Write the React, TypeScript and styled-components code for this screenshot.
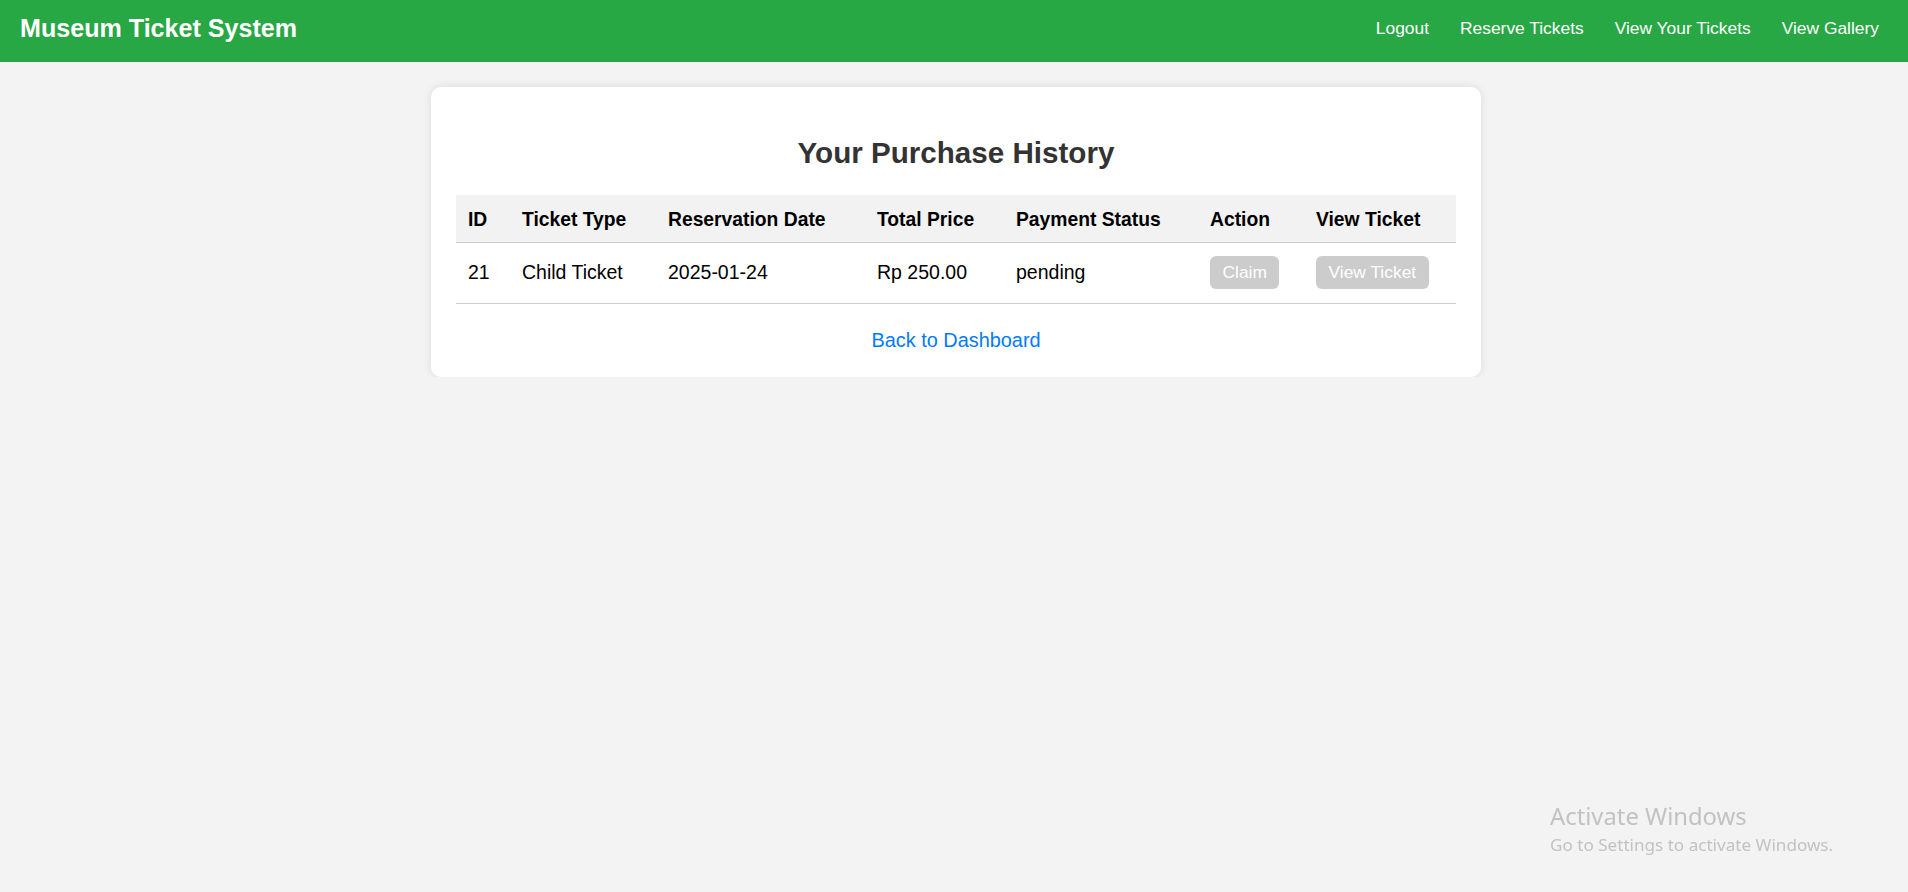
import React from "react";
import styled, { createGlobalStyle } from "styled-components";

const GlobalStyle = createGlobalStyle`
  html, body {
    margin: 0;
    padding: 0;
    background: #f3f3f3;
    font-family: "Liberation Sans", Arial, sans-serif;
  }
  * { box-sizing: border-box; }
`;

const Header = styled.header`
  height: 62px;
  background: #28a745;
  color: #fff;
  display: flex;
  align-items: center;
  justify-content: space-between;
  padding: 0 29px 5px 20px;
`;

const Brand = styled.h1`
  margin: 0;
  font-size: 25.1px;
  font-weight: bold;
  color: #fff;
`;

const Nav = styled.nav`
  display: flex;
  align-items: center;
  gap: 31px;
`;

const NavLink = styled.a`
  color: #fff;
  text-decoration: none;
  font-size: 17.4px;
`;

const Main = styled.main`
  padding-top: 25px;
`;

const Card = styled.section`
  width: 1050px;
  margin: 0 auto;
  background: #fff;
  padding: 25px;
  border-radius: 10px;
  box-shadow: 0 0 10px rgba(0, 0, 0, 0.1);
  transform: translateX(2px);
`;

const Title = styled.h2`
  margin: 24px 0 25px;
  text-align: center;
  color: #333;
  font-size: 29.6px;
  font-weight: bold;
`;

const Table = styled.table`
  width: 100%;
  border-collapse: collapse;
  table-layout: fixed;
`;

const Th = styled.th<{ $w: number }>`
  width: ${(p) => p.$w}px;
  background: #f2f2f2;
  text-align: left;
  font-weight: bold;
  font-size: 19.3px;
  color: #000;
  padding: 14px 12px 10.8px;
  border-bottom: 1px solid #ccc;
  white-space: nowrap;
`;

const Td = styled.td`
  padding: 13.5px 12px;
  font-size: 19.5px;
  color: #000;
  border-bottom: 1px solid #ccc;
  white-space: nowrap;
  vertical-align: middle;
`;

const DisabledButton = styled.button`
  display: block;
  width: fit-content;
  height: 33px;
  padding: 0 12.5px;
  border: none;
  border-radius: 6px;
  background: #ccc;
  color: #fff;
  font-family: "Liberation Sans", Arial, sans-serif;
  font-size: 17.4px;
  cursor: not-allowed;
`;

const Footer = styled.p`
  margin: 25px 0 0;
  text-align: center;
`;

const BackLink = styled.a`
  color: #007bff;
  text-decoration: none;
  font-size: 19.9px;
`;

const Watermark = styled.div`
  position: fixed;
  left: 1550px;
  top: 801px;
  color: #c2c2c2;
  font-family: "Noto Sans", "Open Sans", sans-serif;
  pointer-events: none;
`;

const WatermarkTitle = styled.div`
  font-size: 23.8px;
  line-height: 30px;
`;

const WatermarkSub = styled.div`
  font-size: 17.1px;
  line-height: 28px;
`;

const columns = [
  { label: "ID", w: 54 },
  { label: "Ticket Type", w: 146 },
  { label: "Reservation Date", w: 209 },
  { label: "Total Price", w: 139 },
  { label: "Payment Status", w: 194 },
  { label: "Action", w: 106 },
  { label: "View Ticket", w: 152 },
];

const purchases = [
  { id: 21, type: "Child Ticket", date: "2025-01-24", price: "Rp 250.00", status: "pending" },
];

export default function App() {
  return (
    <>
      <GlobalStyle />
      <Header>
        <Brand>Museum Ticket System</Brand>
        <Nav>
          <NavLink href="#">Logout</NavLink>
          <NavLink href="#">Reserve Tickets</NavLink>
          <NavLink href="#">View Your Tickets</NavLink>
          <NavLink href="#">View Gallery</NavLink>
        </Nav>
      </Header>
      <Main>
        <Card>
          <Title>Your Purchase History</Title>
          <Table>
            <thead>
              <tr>
                {columns.map((c) => (
                  <Th key={c.label} $w={c.w}>
                    {c.label}
                  </Th>
                ))}
              </tr>
            </thead>
            <tbody>
              {purchases.map((p) => (
                <tr key={p.id}>
                  <Td>{p.id}</Td>
                  <Td>{p.type}</Td>
                  <Td>{p.date}</Td>
                  <Td>{p.price}</Td>
                  <Td>{p.status}</Td>
                  <Td>
                    <DisabledButton disabled>Claim</DisabledButton>
                  </Td>
                  <Td>
                    <DisabledButton disabled>View Ticket</DisabledButton>
                  </Td>
                </tr>
              ))}
            </tbody>
          </Table>
          <Footer>
            <BackLink href="#">Back to Dashboard</BackLink>
          </Footer>
        </Card>
      </Main>
      <Watermark>
        <WatermarkTitle>Activate Windows</WatermarkTitle>
        <WatermarkSub>Go to Settings to activate Windows.</WatermarkSub>
      </Watermark>
    </>
  );
}
